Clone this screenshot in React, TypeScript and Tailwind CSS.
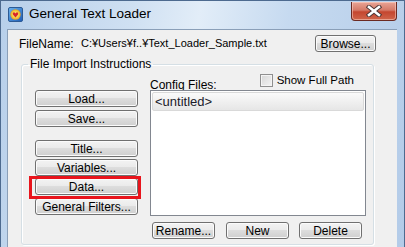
import { clsx } from 'clsx'

const ui = "font-['Liberation_Sans',Arial,sans-serif]"

function Btn({ label, className }: { label: string; className?: string }) {
  return (
    <button
      className={clsx(
        'flex h-[17px] items-center justify-center rounded-[3px] border border-[#707070] bg-[linear-gradient(#f3f3f3,#ebebeb_45%,#dddddd_50%,#cfcfcf)] text-[12px] leading-none text-black shadow-[inset_0_0_0_1px_#fbfbfb]',
        className,
      )}
    >
      {label}
    </button>
  )
}

function AppIcon() {
  return (
    <svg width="15" height="15" viewBox="0 0 15 15">
      <defs>
        <linearGradient id="ic" x1="0" y1="0" x2="1" y2="1">
          <stop offset="0" stopColor="#6cb4ee" />
          <stop offset="1" stopColor="#1d5cb6" />
        </linearGradient>
        <radialGradient id="sun" cx="0.5" cy="0.5" r="0.5">
          <stop offset="0" stopColor="#fff3a0" />
          <stop offset="0.7" stopColor="#f5c93a" />
          <stop offset="1" stopColor="#e39a2a" />
        </radialGradient>
      </defs>
      <rect x="0.5" y="0.5" width="14" height="14" rx="1.5" fill="url(#ic)" stroke="#2d5b96" />
      <circle cx="7.5" cy="7.5" r="5.2" fill="url(#sun)" />
      <path d="M7.5 10.4 L5.1 7.7 C4.3 6.7 5.2 5 6.4 5.4 C7 5.6 7.3 6 7.5 6.4 C7.7 6 8 5.6 8.6 5.4 C9.8 5 10.7 6.7 9.9 7.7 Z" fill="#d8262a" />
    </svg>
  )
}

function CloseButton() {
  return (
    <div className="mt-[1px] flex h-[19px] w-[46px] items-center justify-center rounded-b-[4px] border border-t-0 border-[#6b2a22] bg-[linear-gradient(#e9a596,#d57a68_45%,#c4462f_55%,#d0654b)] shadow-[inset_0_0_0_1px_rgba(255,220,210,0.5)]">
      <svg width="16" height="12" viewBox="0 0 16 12">
        <path d="M3 2 L13 10 M13 2 L3 10" stroke="#4a3434" strokeWidth="4.4" strokeLinecap="square" />
        <path d="M3 2 L13 10 M13 2 L3 10" stroke="#ffffff" strokeWidth="2.6" strokeLinecap="square" />
      </svg>
    </div>
  )
}

export default function App() {
  return (
    <div
      className={clsx(
        'flex h-[247px] w-[405px] flex-col overflow-hidden border-x border-t border-[#4d6a8f] bg-[linear-gradient(100deg,#b7cfea_0%,#cfe0f2_30%,#e2edf8_45%,#c6daf0_65%,#b3cbe8_100%)]',
        ui,
      )}
    >
      <div className="flex h-[28px] shrink-0 items-start">
        <div className="ml-[7px] mt-[6px]">
          <AppIcon />
        </div>
        <span className="ml-[6px] mt-[5px] text-[13.5px] leading-[16px] text-black">General Text Loader</span>
        <div className="ml-auto mr-[7px]">
          <CloseButton />
        </div>
      </div>

      <div className="ml-[6px] mr-[7px] flex flex-1 flex-col border-l border-t border-[#8a9fb8] bg-[#f0f0f0] text-[12px] text-black">
        <div className="flex items-center pl-[11px] pr-[21px] pt-[5px]">
          <span className="w-[62px] leading-none">FileName:</span>
          <span className="text-[11px] leading-none">C:¥Users¥f..¥Text_Loader_Sample.txt</span>
          <Btn label="Browse..." className="ml-auto w-[61px]" />
        </div>

        <fieldset className="relative ml-[13px] mr-[23px] mt-[5px] h-[188px] rounded-[3px] border border-[#d5dfe5] shadow-[inset_1px_1px_0_#fff,1px_1px_0_#fff]">
          <legend className="ml-[6px] px-[2px] text-[12px] leading-[14px]">File Import Instructions</legend>

          <div className="flex pl-[13px]">
            <div className="mt-[19px] flex w-[103px] flex-col">
              <Btn label="Load..." />
              <Btn label="Save..." className="mt-[3px]" />
              <Btn label="Title..." className="mt-[13px]" />
              <Btn label="Variables..." className="mt-[2px]" />
              <Btn label="Data..." className="mt-[2px]" />
              <Btn label="General Filters..." className="mt-[3px]" />
            </div>

            <div className="ml-[12px] flex w-[216px] flex-col">
              <div className="mt-[3px] flex h-[15px] items-end">
                <span className="mb-[-2px] leading-none">Config Files:</span>
                <label className="ml-auto mr-[12px] flex items-center gap-[4px] self-start">
                  <span className="h-[13px] w-[13px] border border-[#8f8f8f] bg-[linear-gradient(135deg,#d6d6d6,#f4f4f4)] shadow-[inset_0_0_0_1px_#f4f4f4]" />
                  <span className="text-[11.5px] leading-none">Show Full Path</span>
                </label>
              </div>
              <div className="mt-[1px] h-[126px] border border-[#828790] bg-white p-[1px]">
                <div className="flex h-[19px] items-center rounded-[2px] border border-[#d9d9d9] bg-[linear-gradient(#fafafa,#e6e6e6)] pl-[2px] text-[13px] leading-none text-[#1a1a2a]">
                  &lt;untitled&gt;
                </div>
              </div>
              <div className="mt-[6px] flex pl-[2px]">
                <Btn label="Rename..." className="w-[63px]" />
                <Btn label="New" className="ml-[11px] w-[63px]" />
                <Btn label="Delete" className="ml-[10px] w-[63px]" />
              </div>
            </div>
          </div>

          <div className="absolute left-[7px] top-[105px] h-[23px] w-[112px] border-[3px] border-[#e8141c]" />
        </fieldset>
      </div>
    </div>
  )
}
